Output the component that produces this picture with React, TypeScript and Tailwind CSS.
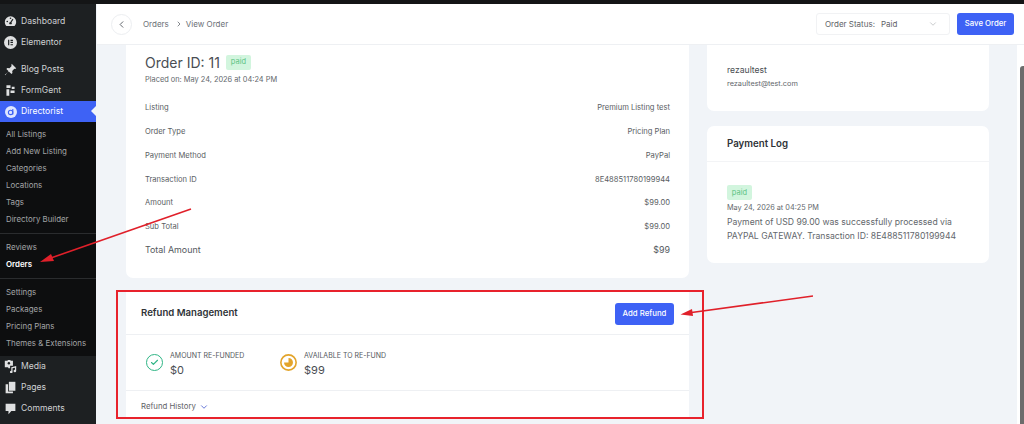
import { ChevronLeft, ChevronRight, ChevronDown, Check } from "lucide-react"

const font = "font-['Inter','Liberation_Sans',sans-serif]"
const iconFill = "#dfe0e1"

const DashboardIcon = () => (
	<svg width="13" height="13" viewBox="0 0 16 16" fill={iconFill}>
		<path d="M8 1.5a7 7 0 0 0-7 7c0 1.9.7 3.6 2 4.9h10a7 7 0 0 0 2-4.9 7 7 0 0 0-7-7z" />
		<path d="M8 9.5L11 5" stroke="#1d2022" strokeWidth="1.4" />
		<circle cx="8" cy="10" r="1.5" fill="#1d2022" />
		<circle cx="4" cy="8" r="1" fill="#1d2022" />
		<circle cx="8" cy="4" r="1" fill="#1d2022" />
	</svg>
)

const ElementorIcon = () => (
	<svg width="13" height="13" viewBox="0 0 16 16">
		<circle cx="8" cy="8" r="8" fill={iconFill} />
		<path d="M5 4.5h1.5v7H5zM8 4.5h3V6H8zM8 7.2h3v1.5H8zM8 10h3v1.5H8z" fill="#1d2022" />
	</svg>
)

const PinIcon = () => (
	<svg width="13" height="13" viewBox="0 0 16 16" fill={iconFill}>
		<path d="M9.5 1l5.5 5.5-1.3 1-1-.4-2.6 2.6.3 2.7-1.2 1.2L5.6 10 1.5 15 1 14.5 6 10.4 2.9 7.3l1.2-1.2 2.7.3 2.6-2.6-.4-1z" />
	</svg>
)

const FormGentIcon = () => (
	<svg width="13" height="13" viewBox="0 0 16 16" fill={iconFill}>
		<path d="M3 1.5h5v3.5H3zM9.5 3.5H13V6H9.5zM3 6.5h3.5v8H3zM8 8h5v3H8z" />
	</svg>
)

const DirectoristIcon = () => (
	<svg width="12" height="12" viewBox="0 0 12 12">
		<circle cx="6" cy="6" r="6" fill="#dfe6ff" />
		<circle cx="5.6" cy="6.4" r="2.2" fill="none" stroke="#3e62f5" strokeWidth="1.1" />
		<path d="M7.8 3v5.5" stroke="#3e62f5" strokeWidth="1.1" />
	</svg>
)

const MediaIcon = () => (
	<svg width="13" height="13" viewBox="0 0 16 16" fill={iconFill}>
		<path d="M1 1h3l1-1h2.5l1 1H11v6H7.5v3H5.5L5 9H1z" />
		<circle cx="6" cy="4" r="1.5" fill="#1d2022" />
		<path d="M9 9l6-1.5v6a1.6 1.6 0 1 1-1.5-1.6V9.5l-3 .8v4.4a1.6 1.6 0 1 1-1.5-1.6z" />
	</svg>
)

const PagesIcon = () => (
	<svg width="13" height="13" viewBox="0 0 16 16" fill={iconFill}>
		<path d="M6 1h8v11H6z" />
		<path d="M2 4h3v9h6v2H2z" />
	</svg>
)

const CommentsIcon = () => (
	<svg width="13" height="13" viewBox="0 0 16 16" fill={iconFill}>
		<path d="M2 2h12v9H9l-3.5 4V11H2z" />
	</svg>
)

const Sep = () => <div className="h-px bg-[#2a2c2e] my-[5px]" />

const SubItem = ({ label, active }: { label: string; active?: boolean }) => (
	<div className={`h-[17px] pl-[6px] text-[7.9px] leading-[17px] whitespace-nowrap ${active ? "font-semibold text-white" : "text-[#a3a5a7]"}`}>
		{label}
	</div>
)

const MenuItem = ({ icon, label }: { icon: React.ReactNode; label: string }) => (
	<div className="flex items-center h-[21px] pl-[3px] text-[8.6px] text-[#cfd1d3]">
		<div className="w-[18px] pr-[3px] flex justify-center">{icon}</div>
		<span>{label}</span>
	</div>
)

const Sidebar = () => (
	<div className="w-[96px] shrink-0 bg-[#1d2022] h-full overflow-hidden pt-[7px]">
		<MenuItem icon={<DashboardIcon />} label="Dashboard" />
		<MenuItem icon={<ElementorIcon />} label="Elementor" />
		<div className="h-[6px]" />
		<MenuItem icon={<PinIcon />} label="Blog Posts" />
		<MenuItem icon={<FormGentIcon />} label="FormGent" />
		<div className="relative flex items-center h-[21px] pl-[3px] text-[8.6px] text-white bg-[#3e62f5]">
			<div className="w-[18px] pr-[3px] flex justify-center"><DirectoristIcon /></div>
			<span>Directorist</span>
			<div className="absolute right-0 top-[5px] border-y-[5.5px] border-y-transparent border-r-[5px] border-r-[#f1f4f8]" />
		</div>
		<div className="bg-[#0d0e0f] pt-[4px] pb-[4px]">
			<SubItem label="All Listings" />
			<SubItem label="Add New Listing" />
			<SubItem label="Categories" />
			<SubItem label="Locations" />
			<SubItem label="Tags" />
			<SubItem label="Directory Builder" />
			<Sep />
			<SubItem label="Reviews" />
			<SubItem label="Orders" active />
			<Sep />
			<SubItem label="Settings" />
			<SubItem label="Packages" />
			<SubItem label="Pricing Plans" />
			<SubItem label="Themes & Extensions" />
		</div>
		<MenuItem icon={<MediaIcon />} label="Media" />
		<MenuItem icon={<PagesIcon />} label="Pages" />
		<MenuItem icon={<CommentsIcon />} label="Comments" />
	</div>
)

const Header = () => (
	<div className="h-[41px] shrink-0 bg-white border-b border-[#eef0f3] flex items-center pl-[14px] pr-[10px]">
		<div className="w-[21px] h-[21px] rounded-full border border-[#eceef1] flex items-center justify-center">
			<ChevronLeft size={11} color="#555a60" strokeWidth={2} />
		</div>
		<span className="ml-[11px] text-[8px] text-[#6b7076]">Orders</span>
		<ChevronRight size={8} color="#6b7076" strokeWidth={2.5} className="ml-[6px]" />
		<span className="ml-[3px] text-[8px] text-[#6b7076]">View Order</span>
		<div className="ml-auto w-[134px] h-[22px] rounded-[3px] border border-[#f1f2f4] flex items-center pl-[8px] pr-[11px] text-[8px] text-[#5f6368]">
			<span>Order Status:</span>
			<span className="ml-[6px]">Paid</span>
			<ChevronDown size={10} color="#a8abaf" strokeWidth={1.5} className="ml-auto" />
		</div>
		<button className="ml-[7px] w-[57px] h-[22px] rounded-[3px] bg-[#3e62f5] text-white text-[7.8px] font-medium">Save Order</button>
	</div>
)

const Badge = () => (
	<span className="flex items-center justify-center w-[25px] h-[15px] rounded-[2px] bg-[#d2f5de] text-[#5cc384] text-[7.5px]">paid</span>
)

const Row = ({ label, value }: { label: string; value: string }) => (
	<div className="flex items-center justify-between h-[23.8px] text-[7.6px] text-[#5a5e63]">
		<span>{label}</span>
		<span>{value}</span>
	</div>
)

const OrderCard = () => (
	<div className="bg-white rounded-b-[7px] h-[233px] px-[19px] pt-[7px]">
		<div className="flex items-center h-[20px]">
			<span className="text-[14px] text-[#4a4e53]">Order ID: 11</span>
			<span className="ml-[6px]"><Badge /></span>
		</div>
		<div className="text-[7.4px] text-[#63676c] mt-[2px] leading-[12px]">Placed on: May 24, 2026 at 04:24 PM</div>
		<div className="mt-[10px]">
			<Row label="Listing" value="Premium Listing test" />
			<Row label="Order Type" value="Pricing Plan" />
			<Row label="Payment Method" value="PayPal" />
			<Row label="Transaction ID" value="8E488511780199944" />
			<Row label="Amount" value="$99.00" />
			<Row label="Sub Total" value="$99.00" />
		</div>
		<div className="flex items-center justify-between h-[22px] text-[8.9px] text-[#54585d]">
			<span>Total Amount</span>
			<span>$99</span>
		</div>
	</div>
)

const Stat = ({ icon, label, value }: { icon: React.ReactNode; label: string; value: string }) => (
	<div className="flex items-center">
		{icon}
		<div className="ml-[7px] pt-[2px]">
			<div className="text-[7px] leading-[10px] text-[#54585d]">{label}</div>
			<div className="text-[11px] leading-[14px] mt-[2px] text-[#4a4e53]">{value}</div>
		</div>
	</div>
)

const RefundCard = () => (
	<div className="bg-white mt-[13px] h-[127px]">
		<div className="h-[44px] pt-[2px] border-b border-[#eef0f3] flex items-center justify-between pl-[15px] pr-[15px]">
			<span className="text-[9.6px] font-semibold text-[#2f3337]">Refund Management</span>
			<button className="w-[59px] h-[22px] rounded-[3px] bg-[#3e62f5] text-white text-[7.8px] font-medium">Add Refund</button>
		</div>
		<div className="h-[56px] border-b border-[#eef0f3] flex items-center pl-[20px]">
			<div className="w-[134px]">
				<Stat
					label="AMOUNT RE-FUNDED"
					value="$0"
					icon={
						<div className="w-[17px] h-[17px] rounded-full border-[1.5px] border-[#2eb585] flex items-center justify-center">
							<Check size={9} color="#2eb585" strokeWidth={3} />
						</div>
					}
				/>
			</div>
			<Stat
				label="AVAILABLE TO RE-FUND"
				value="$99"
				icon={
					<svg width="17" height="17" viewBox="0 0 16 16">
						<circle cx="8" cy="8" r="7.2" fill="none" stroke="#e3a42b" strokeWidth="1.5" />
						<path d="M8 3.8a4.2 4.2 0 1 1-4.2 4.2H8z" fill="#e3a42b" />
					</svg>
				}
			/>
		</div>
		<div className="flex items-center h-[31px] pl-[15px] text-[7.8px] text-[#5f6368]">
			<span>Refund History</span>
			<ChevronDown size={10} color="#4a5fd0" strokeWidth={2} className="ml-[3px]" />
		</div>
	</div>
)

const UserCard = () => (
	<div className="bg-white rounded-b-[7px] h-[66px] pl-[20px] pt-[18px]">
		<div className="text-[8.6px] text-[#4a4e53] leading-[14px]">rezaultest</div>
		<div className="text-[7.3px] text-[#63676c] leading-[12px] mt-[1px]">rezaultest@test.com</div>
	</div>
)

const PaymentLog = () => (
	<div className="bg-white rounded-[7px] mt-[15px] h-[137px]">
		<div className="h-[36px] pt-[2px] border-b border-[#f3f4f6] flex items-center pl-[20px] text-[9.7px] font-semibold text-[#2f3337]">Payment Log</div>
		<div className="pl-[20px] pr-[8px] pt-[23px]">
			<Badge />
			<div className="text-[7.3px] text-[#63676c] leading-[12px] mt-[2px]">May 24, 2026 at 04:25 PM</div>
			<div className="text-[8.65px] text-[#63676c] leading-[13.5px] mt-[2px]">
				Payment of USD 99.00 was successfully processed via PAYPAL GATEWAY. Transaction ID: 8E488511780199944
			</div>
		</div>
	</div>
)

const Annotations = () => (
	<>
		<div className="absolute left-[116px] top-[290px] w-[588px] h-[129px] border-2 border-[#e8222c] pointer-events-none" />
		<svg className="absolute left-0 top-0 pointer-events-none" width="1024" height="424" viewBox="0 0 1024 424">
			<path d="M191 209L48 259" stroke="#e0202a" strokeWidth="1.6" />
			<path d="M40 262L51 254L54 261z" fill="#e0202a" />
			<path d="M813 296L688 313" stroke="#e0202a" strokeWidth="1.6" />
			<path d="M680.5 314.5L692 309L693 316z" fill="#e0202a" />
		</svg>
	</>
)

const Scrollbar = () => (
	<div className="absolute right-0 top-[45px] w-[7px] h-[379px] bg-white flex justify-end items-end">
		<div className="w-[4px] h-[358px] bg-[#6c6c6c] rounded-tl-[3px]" />
	</div>
)

export default function App() {
	return (
		<div className={`relative w-[1024px] h-[424px] overflow-hidden bg-[#f1f4f8] ${font}`}>
			<div className="h-[4px] bg-[#141516]" />
			<div className="flex h-[420px]">
				<Sidebar />
				<div className="w-px bg-[#f1f4f8]" />
				<div className="flex-1 flex flex-col min-w-0">
					<Header />
					<div className="flex pl-[29px] gap-[18px]">
						<div className="w-[563px]">
							<OrderCard />
							<RefundCard />
						</div>
						<div className="w-[282px]">
							<UserCard />
							<PaymentLog />
						</div>
					</div>
				</div>
			</div>
			<Scrollbar />
			<Annotations />
		</div>
	)
}
